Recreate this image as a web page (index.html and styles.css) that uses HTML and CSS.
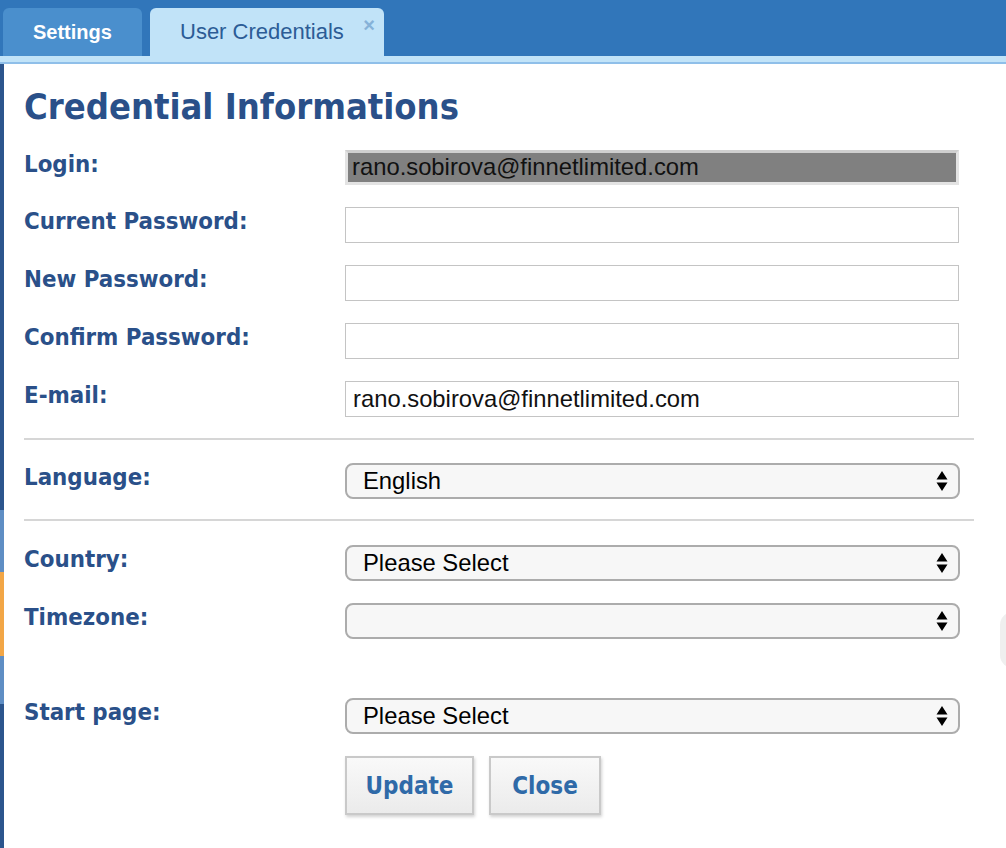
FILE: index.html
```html
<!DOCTYPE html>
<html>
<head>
<meta charset="utf-8">
<link rel="stylesheet" href="styles.css">
</head>
<body>
<div class="tabbar">
  <div class="tab tab-settings">Settings</div>
  <div class="tab tab-active">User Credentials<span class="tab-close">×</span></div>
</div>
<div class="tabstrip"></div>
<div class="main">
  <div class="sidebar"></div>
  <div class="content">
    <h1 class="title">Credential Informations</h1>
    <div class="row row-first">
      <label class="label">Login:</label>
      <div class="input input-login">rano.sobirova@finnetlimited.com</div>
    </div>
    <div class="row">
      <label class="label">Current Password:</label>
      <div class="input"></div>
    </div>
    <div class="row">
      <label class="label">New Password:</label>
      <div class="input"></div>
    </div>
    <div class="row">
      <label class="label">Confirm Password:</label>
      <div class="input"></div>
    </div>
    <div class="row">
      <label class="label">E-mail:</label>
      <div class="input">rano.sobirova@finnetlimited.com</div>
    </div>
    <div class="sep"></div>
    <div class="row row-lang">
      <label class="label">Language:</label>
      <div class="select"><span>English</span><svg class="arrows" width="12" height="22" viewBox="0 0 12 22"><path d="M6 1 L11.5 9.5 L0.5 9.5 Z M6 21 L11.5 12.5 L0.5 12.5 Z" fill="#000"/></svg></div>
    </div>
    <div class="sep sep2"></div>
    <div class="row row-country">
      <label class="label">Country:</label>
      <div class="select"><span>Please Select</span><svg class="arrows" width="12" height="22" viewBox="0 0 12 22"><path d="M6 1 L11.5 9.5 L0.5 9.5 Z M6 21 L11.5 12.5 L0.5 12.5 Z" fill="#000"/></svg></div>
    </div>
    <div class="row">
      <label class="label">Timezone:</label>
      <div class="select"><span></span><svg class="arrows" width="12" height="22" viewBox="0 0 12 22"><path d="M6 1 L11.5 9.5 L0.5 9.5 Z M6 21 L11.5 12.5 L0.5 12.5 Z" fill="#000"/></svg></div>
    </div>
    <div class="row row-start">
      <label class="label">Start page:</label>
      <div class="select"><span>Please Select</span><svg class="arrows" width="12" height="22" viewBox="0 0 12 22"><path d="M6 1 L11.5 9.5 L0.5 9.5 Z M6 21 L11.5 12.5 L0.5 12.5 Z" fill="#000"/></svg></div>
    </div>
    <div class="buttons">
      <button class="btn btn-update">Update</button>
      <button class="btn btn-close">Close</button>
    </div>
  </div>
  <div class="edge-tab"></div>
</div>
</body>
</html>
```

FILE: styles.css
```css
html, body {
  margin: 0;
  padding: 0;
  background: #fff;
  font-family: "Liberation Sans", Arial, sans-serif;
}
.tabbar {
  background: #3176ba;
  height: 48px;
  padding-top: 8px;
  padding-left: 3px;
  display: flex;
  gap: 8px;
  align-items: flex-end;
}
.tab {
  height: 48px;
  border-radius: 6px 6px 0 0;
  font-size: 20px;
  display: flex;
  align-items: center;
  box-sizing: border-box;
  position: relative;
}
.tab-settings {
  width: 139px;
  background: #4a8fcd;
  color: #fff;
  font-weight: bold;
  padding-left: 30px;
}
.tab-active {
  width: 234px;
  background: #c1e3f8;
  color: #2c5c96;
  padding-left: 30px;
  font-size: 22px;
}
.tab-close {
  position: absolute;
  right: 9px;
  top: 6px;
  font-size: 20px;
  font-weight: bold;
  color: #86b2d8;
}
.tabstrip {
  height: 6px;
  background: #c1e3f8;
  border-bottom: 2px solid #8fbfe9;
}
.main {
  display: flex;
  position: relative;
  height: 784px;
}
.sidebar {
  width: 4px;
  flex: none;
  background: linear-gradient(to bottom,
    #2c558d 0px, #2c558d 446px,
    #5f8ec4 446px, #5f8ec4 508px,
    #f2a646 508px, #f2a646 592px,
    #5f8ec4 592px, #5f8ec4 640px,
    #2c558d 640px);
}
.content {
  padding-left: 20px;
  flex: 1;
}
.title {
  margin: 22px 0 0 0;
  font-family: "DejaVu Sans Condensed", "DejaVu Sans", sans-serif;
  font-weight: bold;
  font-size: 36px;
  line-height: 42px;
  color: #2a5089;
}
.row {
  display: flex;
  align-items: flex-start;
  margin-top: 22px;
}
.row-first {
  margin-top: 22px;
}
.label {
  width: 321px;
  flex: none;
  font-family: "DejaVu Sans Condensed", "DejaVu Sans", sans-serif;
  font-weight: bold;
  font-size: 23.8px;
  line-height: 26px;
  color: #2a5089;
  padding-top: 1px;
}
.input {
  width: 614px;
  height: 36px;
  box-sizing: border-box;
  border: 1px solid #c4c4c4;
  background: #fff;
  font-size: 23.8px;
  line-height: 33px;
  padding-left: 7px;
  color: #111;
}
.input-login {
  height: 35px;
  background: #808080;
  border: 3px solid #e3e3e3;
  border-top-color: #cfcfcf;
  line-height: 28px;
  padding-left: 4px;
  color: #111;
}
.sep {
  width: 950px;
  height: 2px;
  background: #d6d6d6;
  margin-top: 21px;
  margin-bottom: -1px;
}
.row-lang {
  margin-top: 24px;
}
.sep2 {
  margin-top: 20px;
}
.row-country {
  margin-top: 25px;
}
.select {
  width: 615px;
  height: 36px;
  box-sizing: border-box;
  border: 2px solid #acacac;
  border-radius: 8px;
  background: #f7f7f7;
  font-size: 23.8px;
  padding-left: 16px;
  padding-right: 10px;
  display: flex;
  align-items: center;
  justify-content: space-between;
  color: #000;
}
.arrows {
  flex: none;
}
.row-start {
  margin-top: 59px;
}
.buttons {
  display: flex;
  gap: 15px;
  margin-left: 321px;
  margin-top: 22px;
}
.btn {
  height: 59px;
  box-sizing: border-box;
  border: 2px solid #c9c9c9;
  background: linear-gradient(to bottom, #f9f9f9, #ebebeb);
  box-shadow: 1px 2px 3px rgba(0,0,0,0.18);
  font-family: "DejaVu Sans Condensed", "DejaVu Sans", sans-serif;
  font-weight: bold;
  font-size: 24px;
  color: #2f6aa8;
  padding: 0;
}
.btn-update {
  width: 129px;
}
.btn-close {
  width: 112px;
}
.edge-tab {
  position: absolute;
  right: -20px;
  top: 548px;
  width: 26px;
  height: 56px;
  border-radius: 13px;
  background: #efefef;
}
```
